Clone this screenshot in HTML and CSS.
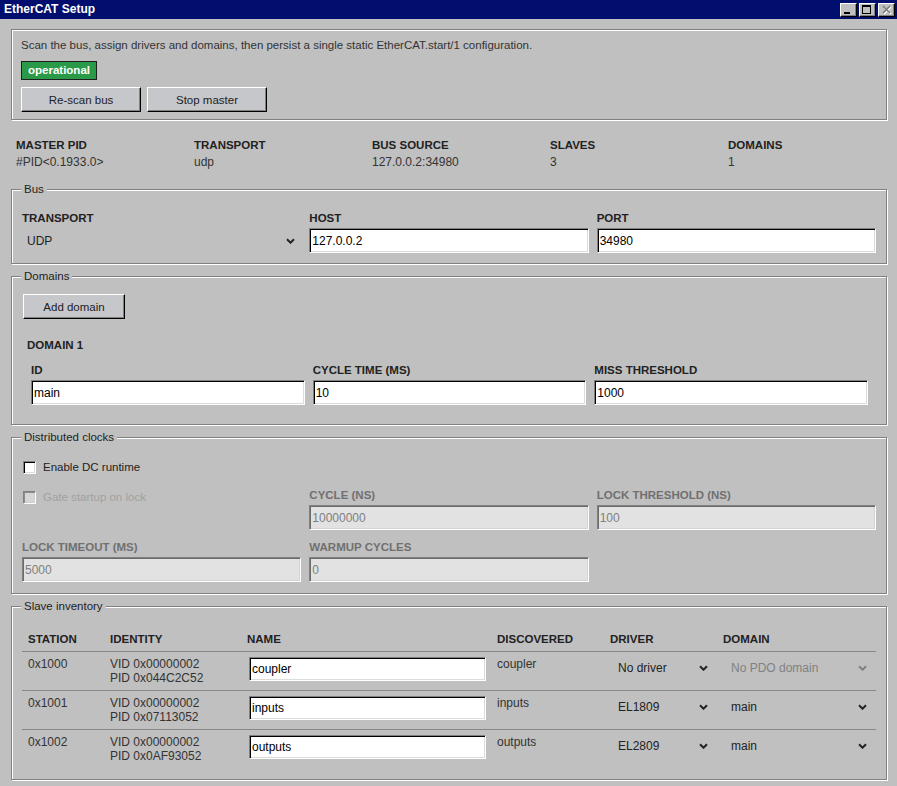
FILE: index.html
```html
<!DOCTYPE html>
<html lang="en">
<head>
<meta charset="utf-8">
<title>EtherCAT Setup</title>
<link rel="stylesheet" href="styles.css">
</head>
<body>
<div class="window">
  <div class="titlebar">
    <span class="title">EtherCAT Setup</span>
    <div class="controls">
      <button class="tb-btn" aria-label="Minimize"><svg width="15" height="12" viewBox="0 0 15 12" shape-rendering="crispEdges"><rect x="3" y="8" width="6" height="2" fill="#000"/></svg></button>
      <button class="tb-btn" aria-label="Maximize"><svg width="15" height="12" viewBox="0 0 15 12" shape-rendering="crispEdges"><rect x="2.5" y="1.5" width="8" height="8" fill="none" stroke="#000" stroke-width="1"/><rect x="2" y="1" width="9" height="2" fill="#000"/></svg></button>
      <button class="tb-btn" aria-label="Close"><svg width="15" height="12" viewBox="0 0 15 12"><path d="M4 2 L11 9 M11 2 L4 9" stroke="#fff" stroke-width="1.6" transform="translate(1 1)"/><path d="M4 2 L11 9 M11 2 L4 9" stroke="#7b7b7b" stroke-width="1.6"/></svg></button>
    </div>
  </div>

  <div class="content">
    <section class="panel">
      <p class="desc">Scan the bus, assign drivers and domains, then persist a single static EtherCAT.start/1 configuration.</p>
      <div class="badge-row"><span class="badge">operational</span></div>
      <div class="actions">
        <button class="btn">Re-scan bus</button>
        <button class="btn">Stop master</button>
      </div>
    </section>

    <div class="stats">
      <div class="stat"><div class="stat-label">MASTER PID</div><div class="stat-value">#PID&lt;0.1933.0&gt;</div></div>
      <div class="stat"><div class="stat-label">TRANSPORT</div><div class="stat-value">udp</div></div>
      <div class="stat"><div class="stat-label">BUS SOURCE</div><div class="stat-value">127.0.0.2:34980</div></div>
      <div class="stat"><div class="stat-label">SLAVES</div><div class="stat-value">3</div></div>
      <div class="stat"><div class="stat-label">DOMAINS</div><div class="stat-value">1</div></div>
    </div>

    <section class="group group-bus">
      <h2 class="group-title">Bus</h2>
      <div class="fields first">
        <div class="field">
          <label class="field-label">TRANSPORT</label>
          <div class="select select-lg"><span>UDP</span><svg class="chev" width="9" height="6" viewBox="0 0 9 6"><path d="M1 1.2 L4.5 4.7 L8 1.2" fill="none" stroke="currentColor" stroke-width="2"/></svg></div>
        </div>
        <div class="field">
          <label class="field-label">HOST</label>
          <input class="input" type="text" value="127.0.0.2">
        </div>
        <div class="field">
          <label class="field-label">PORT</label>
          <input class="input" type="text" value="34980">
        </div>
      </div>
    </section>

    <section class="group group-domains">
      <h2 class="group-title">Domains</h2>
      <button class="btn btn-add">Add domain</button>
      <div class="domain">
        <div class="domain-title">DOMAIN 1</div>
        <div class="fields domain-fields">
          <div class="field">
            <label class="field-label">ID</label>
            <input class="input" type="text" value="main">
          </div>
          <div class="field">
            <label class="field-label">CYCLE TIME (MS)</label>
            <input class="input" type="text" value="10">
          </div>
          <div class="field">
            <label class="field-label">MISS THRESHOLD</label>
            <input class="input" type="text" value="1000">
          </div>
        </div>
      </div>
    </section>

    <section class="group group-dc">
      <h2 class="group-title">Distributed clocks</h2>
      <div class="check-row first-check"><span class="checkbox"></span><span>Enable DC runtime</span></div>
      <div class="fields dc-fields">
        <div class="field">
          <div class="check-row check-disabled gate"><span class="checkbox disabled"></span><span>Gate startup on lock</span></div>
        </div>
        <div class="field">
          <label class="field-label disabled">CYCLE (NS)</label>
          <input class="input disabled" type="text" value="10000000" disabled>
        </div>
        <div class="field">
          <label class="field-label disabled">LOCK THRESHOLD (NS)</label>
          <input class="input disabled" type="text" value="100" disabled>
        </div>
        <div class="field">
          <label class="field-label disabled">LOCK TIMEOUT (MS)</label>
          <input class="input disabled" type="text" value="5000" disabled>
        </div>
        <div class="field">
          <label class="field-label disabled">WARMUP CYCLES</label>
          <input class="input disabled" type="text" value="0" disabled>
        </div>
      </div>
    </section>

    <section class="group group-slaves">
      <h2 class="group-title">Slave inventory</h2>
      <table class="slaves">
        <colgroup>
          <col class="c-station"><col class="c-identity"><col class="c-name"><col class="c-disc"><col class="c-driver"><col class="c-domain">
        </colgroup>
        <thead>
          <tr><th>STATION</th><th>IDENTITY</th><th>NAME</th><th>DISCOVERED</th><th>DRIVER</th><th>DOMAIN</th></tr>
        </thead>
        <tbody>
          <tr>
            <td>0x1000</td>
            <td>VID 0x00000002<br>PID 0x044C2C52</td>
            <td><input class="input name-input" type="text" value="coupler"></td>
            <td>coupler</td>
            <td><div class="select select-sm"><span>No driver</span><svg class="chev" width="9" height="6" viewBox="0 0 9 6"><path d="M1 1.2 L4.5 4.7 L8 1.2" fill="none" stroke="currentColor" stroke-width="2"/></svg></div></td>
            <td><div class="select select-sm select-disabled"><span>No PDO domain</span><svg class="chev" width="9" height="6" viewBox="0 0 9 6"><path d="M1 1.2 L4.5 4.7 L8 1.2" fill="none" stroke="currentColor" stroke-width="2"/></svg></div></td>
          </tr>
          <tr>
            <td>0x1001</td>
            <td>VID 0x00000002<br>PID 0x07113052</td>
            <td><input class="input name-input" type="text" value="inputs"></td>
            <td>inputs</td>
            <td><div class="select select-sm"><span>EL1809</span><svg class="chev" width="9" height="6" viewBox="0 0 9 6"><path d="M1 1.2 L4.5 4.7 L8 1.2" fill="none" stroke="currentColor" stroke-width="2"/></svg></div></td>
            <td><div class="select select-sm"><span>main</span><svg class="chev" width="9" height="6" viewBox="0 0 9 6"><path d="M1 1.2 L4.5 4.7 L8 1.2" fill="none" stroke="currentColor" stroke-width="2"/></svg></div></td>
          </tr>
          <tr>
            <td>0x1002</td>
            <td>VID 0x00000002<br>PID 0x0AF93052</td>
            <td><input class="input name-input" type="text" value="outputs"></td>
            <td>outputs</td>
            <td><div class="select select-sm"><span>EL2809</span><svg class="chev" width="9" height="6" viewBox="0 0 9 6"><path d="M1 1.2 L4.5 4.7 L8 1.2" fill="none" stroke="currentColor" stroke-width="2"/></svg></div></td>
            <td><div class="select select-sm"><span>main</span><svg class="chev" width="9" height="6" viewBox="0 0 9 6"><path d="M1 1.2 L4.5 4.7 L8 1.2" fill="none" stroke="currentColor" stroke-width="2"/></svg></div></td>
          </tr>
        </tbody>
      </table>
    </section>
  </div>
</div>
</body>
</html>
```

FILE: styles.css
```css
* { box-sizing: border-box; }

html, body {
  margin: 0;
  padding: 0;
}

body {
  width: 897px;
  height: 786px;
  overflow: hidden;
  background: #c0c0c0;
  font-family: "Liberation Sans", Arial, sans-serif;
  font-size: 11.5px;
  color: #333;
}

/* ---------- title bar ---------- */
.titlebar {
  height: 19px;
  background: #010e6e;
  display: flex;
  align-items: center;
  justify-content: space-between;
  padding: 0 2px 0 4px;
}

.title {
  color: #fff;
  font-weight: bold;
  font-size: 12px;
  line-height: 19px;
}

.controls {
  display: flex;
  gap: 2px;
}

.tb-btn {
  width: 17px;
  height: 14px;
  padding: 0;
  margin: 0;
  background: #c0c0c0;
  border: 1px solid;
  border-color: #fff #000 #000 #fff;
  box-shadow: inset -1px -1px #808080;
  display: flex;
  align-items: flex-start;
  justify-content: flex-start;
}

.tb-btn svg { display: block; }

/* ---------- content ---------- */
.content {
  padding: 10px 10px 0 11px;
}

.panel {
  border: 1px solid #808080;
  box-shadow: inset 1px 1px #fff, 1px 1px #fff;
  padding: 7px 9px 7px;
}

.desc {
  margin: 0;
  line-height: 16px;
  font-size: 11.5px;
  color: #333;
}

.badge-row {
  margin-top: 8px;
  height: 19px;
}

.badge {
  display: inline-block;
  height: 19px;
  line-height: 17px;
  padding: 0 6px;
  background: #2b9a48;
  border: 1px solid #1e1e1e;
  color: #fff;
  font-weight: bold;
  font-size: 11.5px;
}

.actions {
  margin-top: 7px;
  display: flex;
  gap: 6px;
}

.btn {
  width: 120px;
  height: 25px;
  margin: 0;
  padding: 0;
  font-family: "Liberation Sans", Arial, sans-serif;
  font-size: 11.5px;
  color: #222;
  background: #c6c7cb;
  border: 1px solid;
  border-color: #fff #000 #000 #fff;
  box-shadow: inset -1px -1px #808080;
}

/* ---------- stats ---------- */
.stats {
  margin-top: 18px;
  padding: 0 5px;
  display: grid;
  grid-template-columns: repeat(5, 1fr);
  column-gap: 24px;
}

.stat-label {
  font-weight: bold;
  font-size: 11.5px;
  line-height: 14px;
  color: #222;
}

.stat-value {
  margin-top: 3px;
  font-size: 12px;
  line-height: 14px;
  color: #333;
}

/* ---------- groups ---------- */
.group {
  margin-top: 12px;
  border: 1px solid #808080;
  box-shadow: inset 1px 1px #fff, 1px 1px #fff;
  padding: 0 10px 10px;
}

.group-bus { margin-top: 20px; }

.group-title {
  display: table;
  margin: -8px 0 0 -1px;
  padding: 0 3px;
  height: 14px;
  line-height: 14px;
  background: #c0c0c0;
  font-size: 11.5px;
  font-weight: normal;
  color: #222;
}

.fields {
  display: grid;
  grid-template-columns: repeat(3, 1fr);
  column-gap: 8px;
}

.fields.first { margin-top: 15px; }

.field { min-width: 0; }

.field-label {
  display: block;
  font-weight: bold;
  font-size: 11.5px;
  line-height: 14px;
  color: #222;
  margin-bottom: 3px;
}

.field-label.disabled { color: #707070; }

.input {
  display: block;
  width: 100%;
  height: 25px;
  margin: 0;
  padding: 0 2px;
  font-family: "Liberation Sans", Arial, sans-serif;
  font-size: 12px;
  color: #000;
  background: #fff;
  border: 1px solid;
  border-color: #808080 #fff #fff #808080;
  box-shadow: inset 1px 1px #000, inset -1px -1px #dcdcdc;
  outline: none;
}

.input.disabled {
  background: #e2e2e2;
  color: #808080;
  border-color: #808080 #fff #fff #808080;
  box-shadow: inset 1px 1px #6a6a6a, inset -1px -1px #d4d4d4;
}

.select {
  display: flex;
  align-items: center;
  justify-content: space-between;
  font-size: 12px;
  color: #222;
}

.select-lg {
  height: 25px;
  padding: 0 6px 0 5px;
}

.select-sm {
  height: 21px;
  padding: 0 3px 0 8px;
}

.select-disabled { color: #808080; }

.chev { display: block; flex: none; }

/* ---------- domains ---------- */
.btn-add {
  width: 102px;
  margin: 11px 0 0 1px;
  display: block;
}

.domain { margin-top: 19px; }

.domain-title {
  padding-left: 5px;
  font-weight: bold;
  font-size: 11.5px;
  line-height: 14px;
  color: #222;
}

.domain-fields {
  margin-top: 11px;
  padding: 0 8px 0 9px;
}

.group-domains { padding-bottom: 19px; }

/* ---------- distributed clocks ---------- */
.group-dc { padding-bottom: 11px; }

.check-row {
  display: flex;
  align-items: center;
  gap: 7px;
  height: 16px;
  line-height: 16px;
  font-size: 11.5px;
  color: #222;
  padding-left: 1px;
}

.first-check { margin-top: 15px; }

.checkbox {
  width: 13px;
  height: 13px;
  flex: none;
  background: #fff;
  border: 1px solid;
  border-color: #808080 #fff #fff #808080;
  box-shadow: inset 1px 1px #000, inset -1px -1px #dcdcdc;
}

.checkbox.disabled {
  background: #d6d6d6;
  box-shadow: inset 1px 1px #8c8c8c, inset -1px -1px #cfcfcf;
}

.check-disabled { color: #a0a0a0; }

.gate { margin-top: 1px; }

.dc-fields {
  margin-top: 13px;
  row-gap: 10px;
}

/* ---------- slave inventory ---------- */
.group-slaves { padding-bottom: 11px; }

.slaves {
  margin-top: 19px;
  width: 100%;
  border-collapse: collapse;
  table-layout: fixed;
}

.c-station { width: 82px; }
.c-identity { width: 137px; }
.c-name { width: 250px; }
.c-disc { width: 113px; }
.c-driver { width: 113px; }
.c-domain { width: 159px; }

.slaves th {
  text-align: left;
  font-weight: bold;
  font-size: 11.5px;
  line-height: 14px;
  color: #222;
  padding: 0 6px 5px;
  border-bottom: 1px solid #878787;
}

.slaves td {
  vertical-align: top;
  padding: 5px 6px;
  font-size: 12px;
  line-height: 14px;
  color: #333;
  border-bottom: 1px solid #878787;
}

.slaves tbody tr:last-child td { border-bottom: none; }

.name-input {
  width: 237px;
  height: 24px;
  margin-left: 2px;
}
```
